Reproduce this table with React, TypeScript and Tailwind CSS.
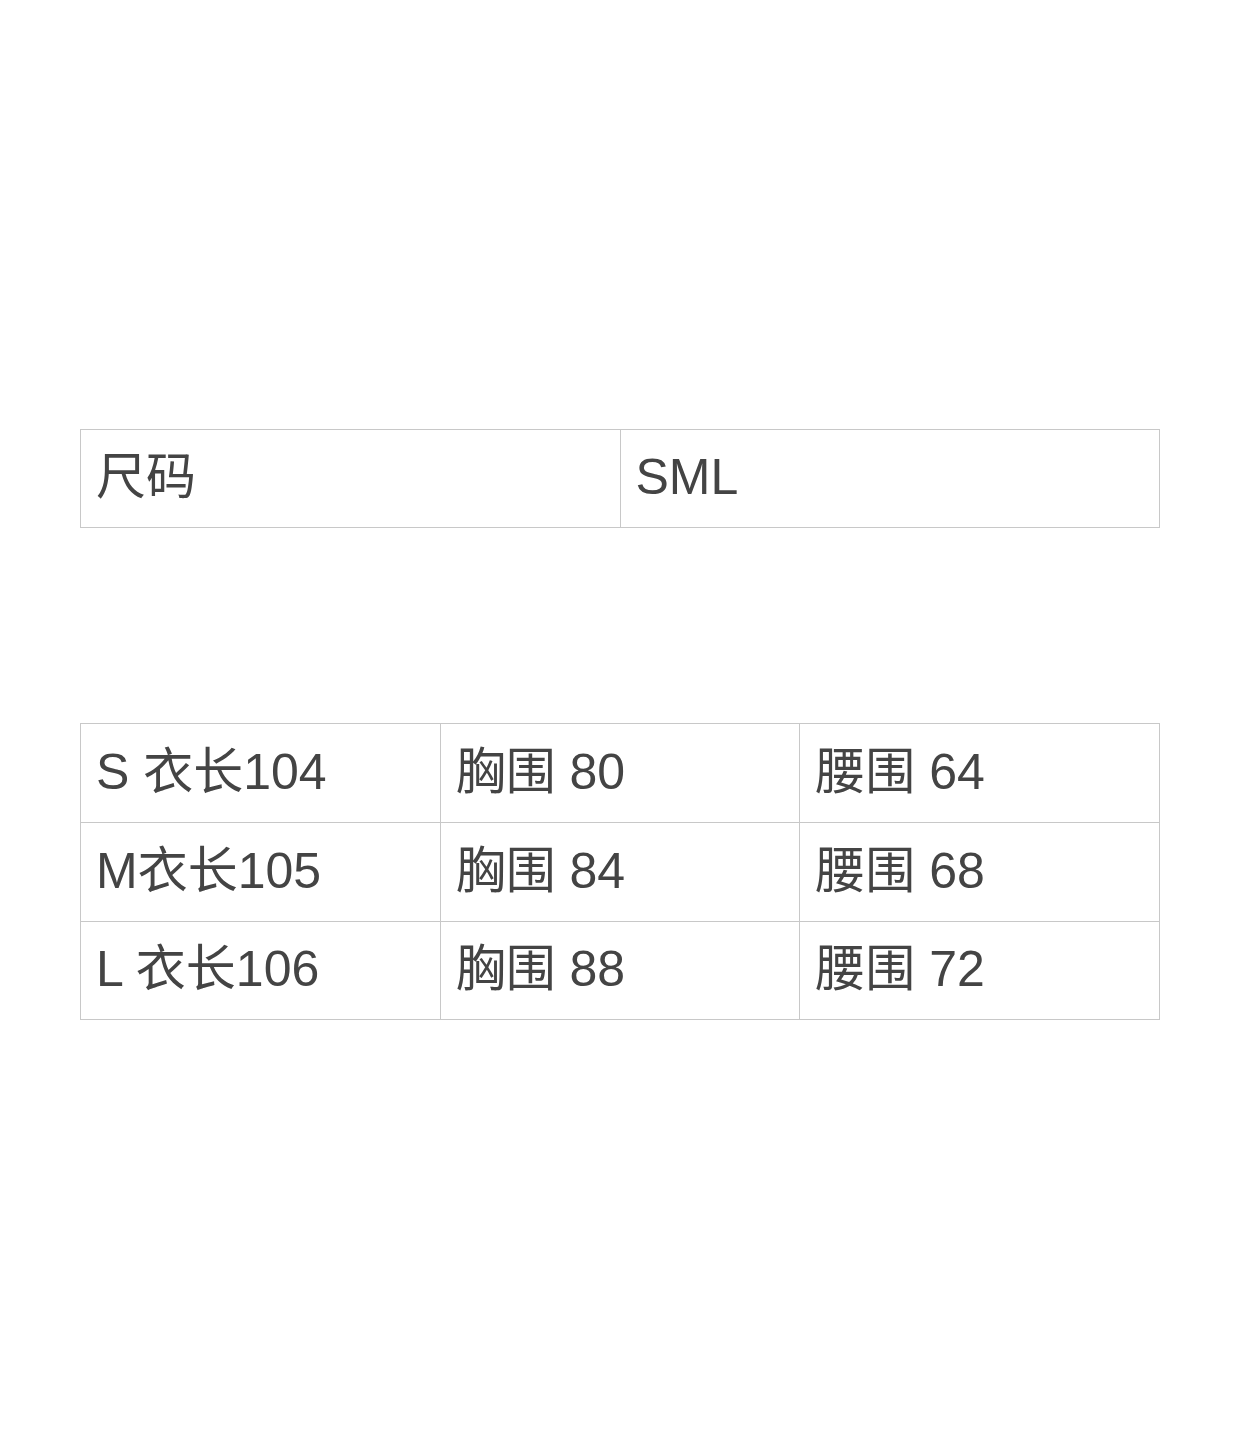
import React from 'react';

const sizeRows = [
  ['S 衣长104', '胸围 80', '腰围 64'],
  ['M衣长105', '胸围 84', '腰围 68'],
  ['L 衣长106', '胸围 88', '腰围 72'],
];

const cell = 'border border-[#c8c8c8] pl-[15px] pr-4 pb-[3px] align-middle text-left font-normal';

export default function App() {
  return (
    <div
      className="min-h-[1449px] bg-white px-[80px] pt-[429px] text-[50px] leading-none text-[#444]"
      style={{ fontFamily: '"Liberation Sans", "Noto Sans CJK SC", sans-serif' }}
    >
      <table className="w-full border-collapse table-fixed">
        <tbody>
          <tr>
            <td className={`${cell} h-[98px]`}>尺码</td>
            <td className={`${cell} h-[98px]`}>SML</td>
          </tr>
        </tbody>
      </table>

      <table className="mt-[195px] w-full border-collapse table-fixed">
        <tbody>
          {sizeRows.map((row, i) => (
            <tr key={row[0]}>
              {row.map((text) => (
                <td key={text} className={`${cell} ${i === 2 ? 'h-[98px]' : 'h-[99px]'}`}>
                  {text}
                </td>
              ))}
            </tr>
          ))}
        </tbody>
      </table>
    </div>
  );
}
